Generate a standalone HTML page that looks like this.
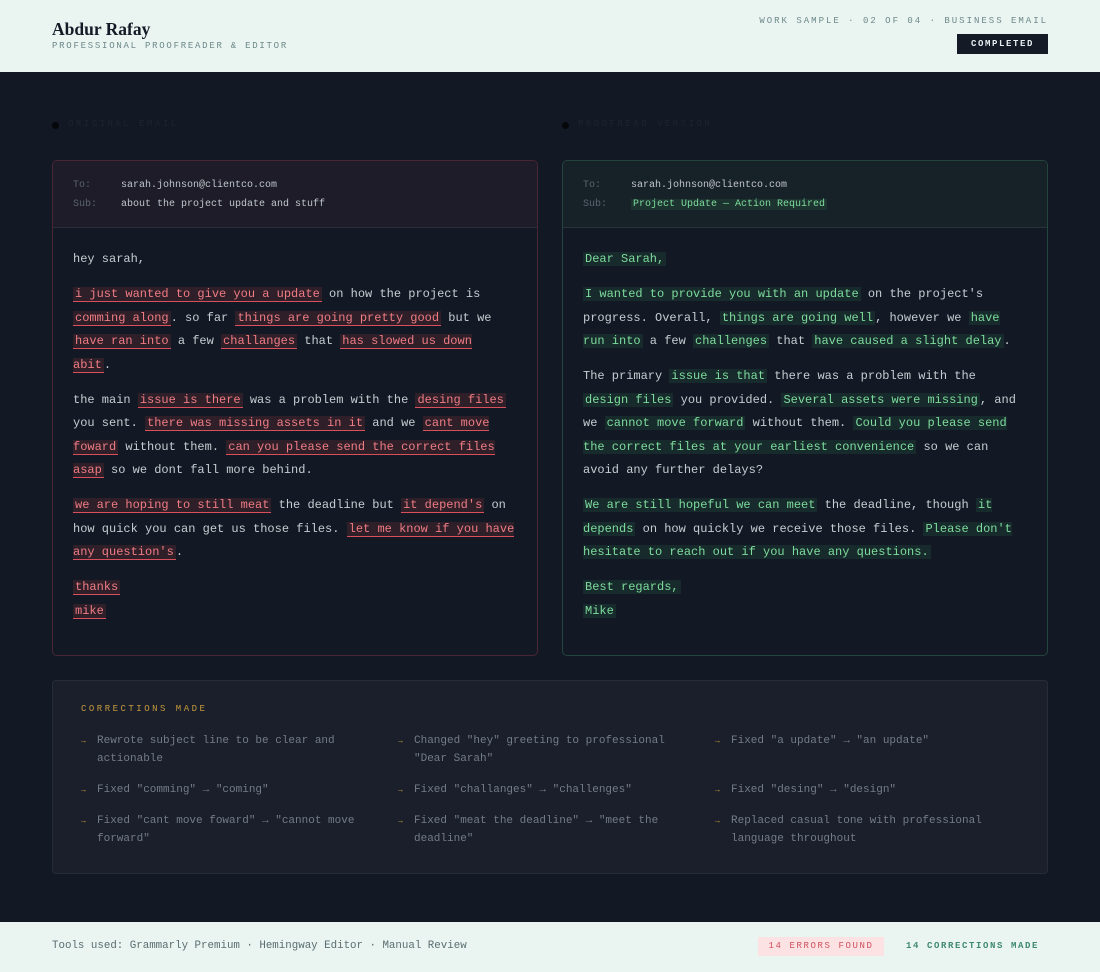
<!DOCTYPE html>
<html><head><meta charset="utf-8"><style>
*{margin:0;padding:0;box-sizing:border-box}
body{width:1100px;height:972px;background:#131924;font-family:"Liberation Mono",monospace;position:relative;overflow:hidden}
.top{position:absolute;left:0;top:0;width:1100px;height:72px;background:#eaf4f1}
.name{position:absolute;left:52px;top:19px;font-family:"Liberation Serif",serif;font-weight:bold;font-size:17.5px;color:#141a26}
.sub{position:absolute;left:52px;top:41px;font-size:9px;letter-spacing:1.75px;color:#6e8a8a}
.ws{position:absolute;right:52px;top:16px;font-size:9px;letter-spacing:2px;color:#6e8a8a}
.badge{position:absolute;left:957px;top:34px;width:91px;height:20px;background:#141a26;color:#e6eef0;font-size:9px;font-weight:bold;letter-spacing:1.6px;text-align:center;line-height:20px}
.lbl{position:absolute;top:119px;font-size:9px;letter-spacing:2.5px;color:#1d2430}
.lbl:before{content:"";position:absolute;left:-16px;top:3px;width:7px;height:7px;border-radius:50%;background:#05070a}
.panel{position:absolute;top:160px;width:486px;height:496px;border-radius:5px;overflow:hidden}
.p1{left:52px;border:1px solid #4a2634}
.p2{left:562px;border:1px solid #24443e}
.hd{height:67px;padding:15px 20px 0 20px;font-size:10px;line-height:19px;color:#c0c6cc}
.p1 .hd{background:#1d1c28;border-bottom:1px solid #2a2e3a}
.p2 .hd{background:#172228;border-bottom:1px solid #26343a}
.hd b{display:inline-block;width:48px;font-weight:normal;color:#5b6470}
.bd{padding:20px 20px;font-size:12px;line-height:23.5px;color:#c7ccd2}
.bd p{margin-bottom:11.5px}
.r{background:rgba(220,70,80,.14);color:#f07c84;border-bottom:1px solid #d9505c;padding:0 2px}
.g{background:rgba(60,170,100,.13);color:#7ddc9c;padding:0 2px}
.hd .g{font-size:10px}
.corr{position:absolute;left:52px;top:680px;width:996px;height:194px;background:#1a1f2b;border:1px solid #262c38;border-radius:4px}
.ct{position:absolute;left:28px;top:23px;font-size:9px;letter-spacing:2.5px;color:#c49a3c}
.grid{position:absolute;left:28px;top:51px;width:940px;display:grid;grid-template-columns:317px 317px 306px;row-gap:13px}
.it{position:relative;padding-left:16px;font-size:11px;line-height:18px;color:#747c87;padding-right:20px}
.it:before{content:"→";position:absolute;left:0;top:1px;color:#c49a3c;font-size:8px}
.foot{position:absolute;left:0;top:922px;width:1100px;height:50px;background:#eaf4f1}
.ft{position:absolute;left:52px;top:18px;font-size:10.8px;color:#5a6e70}
.b1{position:absolute;left:758px;top:15px;width:126px;height:19px;background:#fde2e4;color:#d0505c;font-size:9px;letter-spacing:1.6px;text-align:center;line-height:19px}
.b2{position:absolute;left:897px;top:13px;width:151px;height:23px;color:#3f8a6e;font-size:9px;letter-spacing:1.6px;text-align:center;line-height:23px;font-weight:bold}
</style></head><body>
<div class="top">
<div class="name">Abdur Rafay</div>
<div class="sub">PROFESSIONAL PROOFREADER &amp; EDITOR</div>
<div class="ws">WORK SAMPLE · 02 OF 04 · BUSINESS EMAIL</div>
<div class="badge">COMPLETED</div>
</div>
<div class="lbl" style="left:68px">ORIGINAL EMAIL</div>
<div class="lbl" style="left:578px">PROOFREAD VERSION</div>

<div class="panel p1">
<div class="hd"><div><b>To:</b>sarah.johnson@clientco.com</div><div><b>Sub:</b>about the project update and stuff</div></div>
<div class="bd">
<p>hey sarah,</p>
<p><span class="r">i just wanted to give you a update</span> on how the project is <span class="r">comming along</span>. so far <span class="r">things are going pretty good</span> but we <span class="r">have ran into</span> a few <span class="r">challanges</span> that <span class="r">has slowed us down abit</span>.</p>
<p>the main <span class="r">issue is there</span> was a problem with the <span class="r">desing files</span> you sent. <span class="r">there was missing assets in it</span> and we <span class="r">cant move foward</span> without them. <span class="r">can you please send the correct files asap</span> so we dont fall more behind.</p>
<p><span class="r">we are hoping to still meat</span> the deadline but <span class="r">it depend's</span> on how quick you can get us those files. <span class="r">let me know if you have any question's</span>.</p>
<p><span class="r">thanks</span><br><span class="r">mike</span></p>
</div></div>

<div class="panel p2">
<div class="hd"><div><b>To:</b>sarah.johnson@clientco.com</div><div><b>Sub:</b><span class="g">Project Update — Action Required</span></div></div>
<div class="bd">
<p><span class="g">Dear Sarah,</span></p>
<p><span class="g">I wanted to provide you with an update</span> on the project's progress. Overall, <span class="g">things are going well</span>, however we <span class="g">have run into</span> a few <span class="g">challenges</span> that <span class="g">have caused a slight delay</span>.</p>
<p>The primary <span class="g">issue is that</span> there was a problem with the <span class="g">design files</span> you provided. <span class="g">Several assets were missing</span>, and we <span class="g">cannot move forward</span> without them. <span class="g">Could you please send the correct files at your earliest convenience</span> so we can avoid any further delays?</p>
<p><span class="g">We are still hopeful we can meet</span> the deadline, though <span class="g">it depends</span> on how quickly we receive those files. <span class="g">Please don't hesitate to reach out if you have any questions.</span></p>
<p><span class="g">Best regards,</span><br><span class="g">Mike</span></p>
</div></div>

<div class="corr">
<div class="ct">CORRECTIONS MADE</div>
<div class="grid">
<div class="it">Rewrote subject line to be clear and actionable</div>
<div class="it">Changed "hey" greeting to professional "Dear Sarah"</div>
<div class="it">Fixed "a update" → "an update"</div>
<div class="it">Fixed "comming" → "coming"</div>
<div class="it">Fixed "challanges" → "challenges"</div>
<div class="it">Fixed "desing" → "design"</div>
<div class="it">Fixed "cant move foward" → "cannot move forward"</div>
<div class="it">Fixed "meat the deadline" → "meet the deadline"</div>
<div class="it">Replaced casual tone with professional language throughout</div>
</div></div>

<div class="foot">
<div class="ft">Tools used: Grammarly Premium · Hemingway Editor · Manual Review</div>
<div class="b1">14 ERRORS FOUND</div>
<div class="b2">14 CORRECTIONS MADE</div>
</div>
</body></html>
